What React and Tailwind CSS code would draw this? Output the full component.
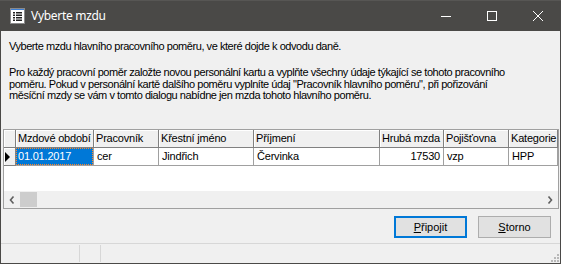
export default function App() {
  const cols = [
    { label: 'Mzdové období', w: 78, val: '01.01.2017', sel: true },
    { label: 'Pracovník', w: 65, val: 'cer' },
    { label: 'Křestní jméno', w: 95, val: 'Jindřich' },
    { label: 'Příjmení', w: 126, val: 'Červinka' },
    { label: 'Hrubá mzda', w: 64, val: '17530', right: true },
    { label: 'Pojišťovna', w: 65, val: 'vzp' },
    { label: 'Kategorie', w: 49, val: 'HPP' },
  ];
  const ui = { fontFamily: '"Liberation Sans", Arial, sans-serif' };
  return (
    <div className="w-[561px] h-[264px] bg-[#4a4947] flex flex-col overflow-hidden">
      {/* Title bar */}
      <div className="h-[31px] flex items-center shrink-0 border-t border-[#575654]">
        <svg width="15" height="16" viewBox="0 0 15 16" className="ml-[10px] mt-[-1px]">
          <rect x="0" y="0" width="15" height="16" fill="#ffffff" />
          <rect x="0" y="0" width="15" height="2" fill="#3d7fd6" />
          <rect x="0.5" y="0.5" width="14" height="15" fill="none" stroke="#8a8a8a" />
          {[4, 6.5, 9, 11.5].map((y) => (
            <g key={y}>
              <rect x="3" y={y} width="2" height="1.5" fill="#222" />
              <rect x="6" y={y} width="6" height="1.5" fill="#222" />
            </g>
          ))}
        </svg>
        <span
          className="ml-[6px] text-white text-[12px] tracking-[-0.3px]"
          style={{ fontFamily: '"Noto Sans", "Open Sans", sans-serif' }}
        >
          Vyberte mzdu
        </span>
        <div className="ml-auto flex items-center h-full">
          <svg width="46" height="31" viewBox="0 0 46 31">
            <line x1="18" y1="15.5" x2="28" y2="15.5" stroke="#fff" strokeWidth="1" />
          </svg>
          <svg width="46" height="31" viewBox="0 0 46 31">
            <rect x="18.5" y="10.5" width="9" height="9" fill="none" stroke="#fff" strokeWidth="1" />
          </svg>
          <svg width="46" height="31" viewBox="0 0 46 31">
            <path d="M18 10 L28 20 M28 10 L18 20" stroke="#fff" strokeWidth="1" />
          </svg>
        </div>
      </div>

      {/* Content */}
      <div className="mx-[1px] mb-[1px] flex-1 bg-[#f0f0f0] flex flex-col text-black" style={ui}>
        <div className="h-[98px] shrink-0 pl-[8px] pt-[9px] text-[11px] tracking-[-0.45px]">
          <p className="leading-[12px]">Vyberte mzdu hlavního pracovního poměru, ve které dojde k odvodu daně.</p>
          <p className="leading-[11.7px] mt-[15px]">
            Pro každý pracovní poměr založte novou personální kartu a vyplňte všechny údaje týkající se tohoto pracovního
            <br />
            poměru. Pokud v personální kartě dalšího poměru vyplníte údaj "Pracovník hlavního poměru", při pořizování
            <br />
            měsíční mzdy se vám v tomto dialogu nabídne jen mzda tohoto hlavního poměru.
          </p>
        </div>

        {/* Grid */}
        <div className="ml-[2px] mr-[1px] h-[80px] shrink-0 border border-[#a0a0a0] bg-white flex flex-col text-[11px] tracking-[-0.2px]">
          <div className="flex h-[18px] shrink-0">
            <div className="w-[12px] shrink-0 bg-[#f0f0f0] border-r border-b border-[#808080] shadow-[inset_1px_1px_0_#fff]" />
            {cols.map((c) => (
              <div
                key={c.label}
                className="shrink-0 bg-[#f0f0f0] border-r border-b border-[#808080] shadow-[inset_1px_1px_0_#fff] pl-[2px] leading-[17px] whitespace-nowrap overflow-hidden"
                style={{ width: c.w }}
              >
                {c.label}
              </div>
            ))}
          </div>
          <div className="flex h-[18px] shrink-0">
            <div className="w-[12px] shrink-0 bg-[#f0f0f0] border-r border-b border-[#808080] shadow-[inset_1px_1px_0_#fff] flex items-center">
              <svg width="6" height="10" viewBox="0 0 6 10" className="ml-[1px]">
                <path d="M0 0 L5 5 L0 10 Z" fill="#000" />
              </svg>
            </div>
            {cols.map((c) =>
              c.sel ? (
                <div
                  key={c.label}
                  className="shrink-0 border-r border-b border-[#a0a0a0] bg-white"
                  style={{ width: c.w }}
                >
                  <div className="h-full bg-[#0078d7] text-white border border-dotted border-[#ff8728] pl-[1px] leading-[15px] whitespace-nowrap">
                    {c.val}
                  </div>
                </div>
              ) : (
                <div
                  key={c.label}
                  className={`shrink-0 border-r border-b border-[#a0a0a0] leading-[17px] whitespace-nowrap overflow-hidden ${c.right ? 'text-right pr-[3px]' : 'pl-[3px]'}`}
                  style={{ width: c.w }}
                >
                  {c.val}
                </div>
              )
            )}
          </div>
          <div className="flex-1" />
          <div className="h-[17px] shrink-0 bg-[#f0f0f0] flex items-center">
            <div className="w-[16px] flex justify-center">
              <svg width="6" height="8" viewBox="0 0 6 8">
                <path d="M4.5 0.5 L1.5 4 L4.5 7.5" stroke="#606060" strokeWidth="1.6" fill="none" />
              </svg>
            </div>
            <div className="w-[17px] h-[15px] bg-[#cdcdcd]" />
            <div className="ml-auto w-[17px] flex justify-center">
              <svg width="6" height="8" viewBox="0 0 6 8">
                <path d="M1.5 0.5 L4.5 4 L1.5 7.5" stroke="#606060" strokeWidth="1.6" fill="none" />
              </svg>
            </div>
          </div>
        </div>

        {/* Buttons */}
        <div className="h-[34px] shrink-0 flex justify-end items-start pt-[7px] pr-[9px] gap-[11px] text-[11px]">
          <button className="w-[73px] h-[22px] bg-[#e1e1e1] border-2 border-[#0078d7] flex items-center justify-center">
            <span><span className="underline">P</span>řipojit</span>
          </button>
          <button className="w-[73px] h-[22px] bg-[#e1e1e1] border border-[#adadad] flex items-center justify-center">
            <span><span className="underline">S</span>torno</span>
          </button>
        </div>

        {/* Status bar */}
        <div className="flex-1 border-t border-[#d7d7d7] flex relative">
          <div className="w-[79px] border-r border-[#d7d7d7] my-[1px]" />
          <div className="w-[21px] border-r border-[#d7d7d7] my-[1px]" />
          <div className="flex-1" />
          <svg width="8" height="8" viewBox="0 0 8 8" className="absolute right-[1px] bottom-[1px]">
            {[[6, 0], [6, 3], [3, 3], [6, 6], [3, 6], [0, 6]].map(([x, y], i) => (
              <rect key={i} x={x} y={y} width="2" height="2" fill="#b8b8b8" />
            ))}
          </svg>
        </div>
      </div>
    </div>
  );
}
